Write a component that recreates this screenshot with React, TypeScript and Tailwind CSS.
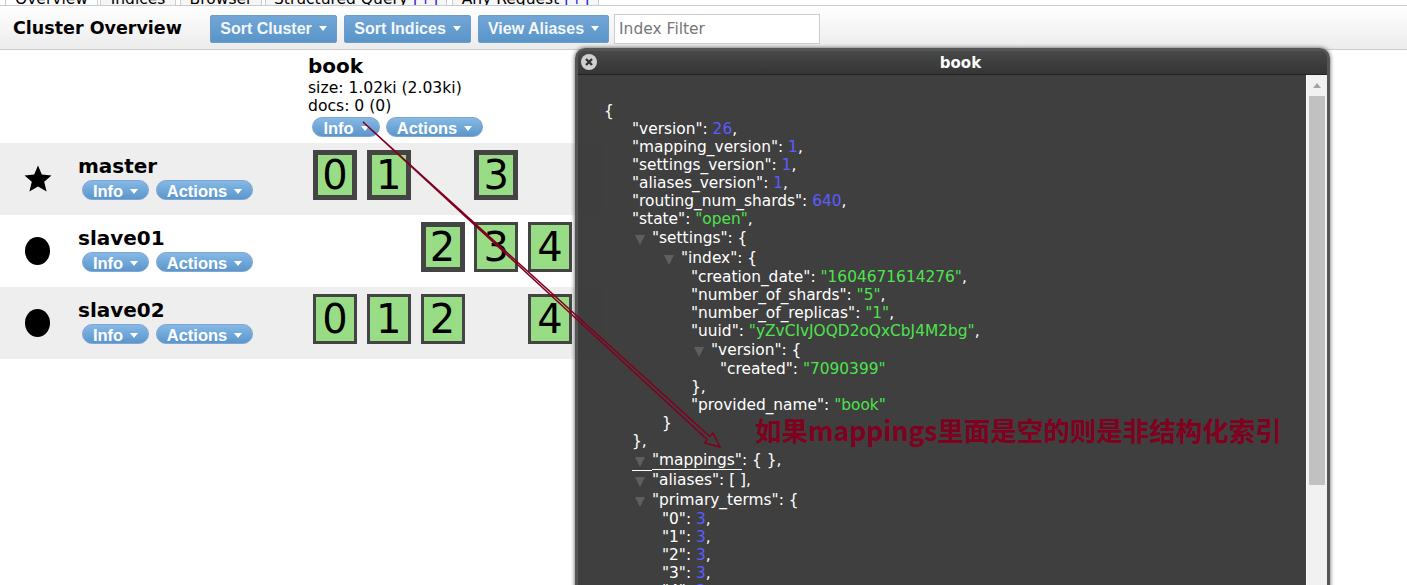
import React from "react";

type Tok = { t: string; c?: "num" | "str" };
type Line = { cls: string; toks: Tok[]; toggle?: boolean; under?: boolean };

const k = (t: string): Tok => ({ t });
const n = (t: string): Tok => ({ t, c: "num" });
const s = (t: string): Tok => ({ t, c: "str" });

const lines: Line[] = [
  { cls: "pl-[26px]", toks: [k("{")] },
  { cls: "pl-[54px]", toks: [k('"version": '), n("26"), k(",")] },
  { cls: "pl-[54px]", toks: [k('"mapping_version": '), n("1"), k(",")] },
  { cls: "pl-[54px]", toks: [k('"settings_version": '), n("1"), k(",")] },
  { cls: "pl-[54px]", toks: [k('"aliases_version": '), n("1"), k(",")] },
  { cls: "pl-[54px]", toks: [k('"routing_num_shards": '), n("640"), k(",")] },
  { cls: "pl-[54px]", toks: [k('"state": '), s('"open"'), k(",")] },
  { cls: "pl-[74px]", toks: [k('"settings": {')], toggle: true },
  { cls: "pl-[103px]", toks: [k('"index": {')], toggle: true },
  { cls: "pl-[113px]", toks: [k('"creation_date": '), s('"1604671614276"'), k(",")] },
  { cls: "pl-[113px]", toks: [k('"number_of_shards": '), s('"5"'), k(",")] },
  { cls: "pl-[113px]", toks: [k('"number_of_replicas": '), s('"1"'), k(",")] },
  { cls: "pl-[113px]", toks: [k('"uuid": '), s('"yZvCIvJOQD2oQxCbJ4M2bg"'), k(",")] },
  { cls: "pl-[133px]", toks: [k('"version": {')], toggle: true },
  { cls: "pl-[142px]", toks: [k('"created": '), s('"7090399"')] },
  { cls: "pl-[113px]", toks: [k("},")] },
  { cls: "pl-[113px]", toks: [k('"provided_name": '), s('"book"')] },
  { cls: "pl-[84px]", toks: [k("}")] },
  { cls: "pl-[54px]", toks: [k("},")] },
  { cls: "pl-[74px]", toks: [k('"mappings"'), k(": { },")], toggle: true, under: true },
  { cls: "pl-[74px]", toks: [k('"aliases": [ ],')], toggle: true },
  { cls: "pl-[74px]", toks: [k('"primary_terms": {')], toggle: true },
  { cls: "pl-[84px]", toks: [k('"0": '), n("3"), k(",")] },
  { cls: "pl-[84px]", toks: [k('"1": '), n("3"), k(",")] },
  { cls: "pl-[84px]", toks: [k('"2": '), n("3"), k(",")] },
  { cls: "pl-[84px]", toks: [k('"3": '), n("3"), k(",")] },
  { cls: "pl-[84px]", toks: [k('"4": '), n("3")] },
];

const tabs = [
  { label: "Overview", cls: "w-[93px] mr-[2px] bg-white", plus: false },
  { label: "Indices", cls: "w-[76px] mr-[4px] bg-[#f6f6f6]", plus: false },
  { label: "Browser", cls: "w-[82px] mr-[3px] bg-[#f6f6f6]", plus: false },
  { label: "Structured Query", cls: "w-[182px] mr-[5px] bg-[#f6f6f6]", plus: true },
  { label: "Any Request", cls: "w-[147px] bg-[#f6f6f6]", plus: true },
];

const Caret = () => (
  <span className="ml-[7px] inline-block h-0 w-0 border-x-[4.5px] border-t-[5px] border-x-transparent border-t-white" />
);

const ToolButton = ({ label, cls }: { label: string; cls: string }) => (
  <div
    className={`flex h-[28px] items-center justify-center rounded-[2px] border border-[#6c9cc9] bg-gradient-to-b from-[#72a6d6] to-[#5a95c9] font-['Liberation_Sans',sans-serif] text-[16px] font-bold text-[#f2f7fb] ${cls}`}
  >
    {label}
    <Caret />
  </div>
);

const PillButton = ({ label, cls }: { label: string; cls: string }) => (
  <div
    className={`flex h-[20px] items-center justify-center rounded-[10px] border border-[#82a4d6] bg-gradient-to-b from-[#86b9e5] to-[#5b96cb] pt-[2px] font-['Liberation_Sans',sans-serif] text-[16.5px] font-bold leading-none text-white ${cls}`}
  >
    {label}
    <Caret />
  </div>
);

const Shard = ({ num, primary }: { num: number | null; primary?: boolean }) => {
  if (num === null) return <div />;
  return (
    <div
      className={`flex h-[50px] w-[44px] items-center justify-center border-[#444] bg-[#98dd86] text-[40px] leading-none text-black ${
        primary ? "border-[5px]" : "border-[3px]"
      }`}
    >
      {num}
    </div>
  );
};

const nodes = [
  { name: "master", icon: "star", shards: [0, 1, null, 3, null], primary: true, bg: "bg-[#eeeeee]" },
  { name: "slave01", icon: "dot", shards: [null, null, 2, 3, 4], primary: false, bg: "bg-white" },
  { name: "slave02", icon: "dot", shards: [0, 1, 2, null, 4], primary: false, bg: "bg-[#eeeeee]" },
];

const NodeIcon = ({ kind }: { kind: string }) => (
  <svg width="30" height="30" viewBox="0 0 30 30">
    {kind === "star" ? (
      <polygon points="15,1.5 18.8,10.6 28.5,11.4 21.2,17.8 23.6,27.5 15,22.4 6.4,27.5 8.8,17.8 1.5,11.4 11.2,10.6" fill="#000" />
    ) : (
      <ellipse cx="14.5" cy="15" rx="12.5" ry="14" fill="#000" />
    )}
  </svg>
);

const JsonLine = ({ line }: { line: Line }) => (
  <div className={`relative flex items-center whitespace-pre ${line.cls} ${line.toggle ? "h-[20px]" : "h-[18px]"}`}>
    {line.toggle && (
      <span
        className={`absolute top-0 flex h-[20px] w-[20px] items-center -translate-x-[20px] ${
          line.under ? "border-b border-white" : ""
        }`}
      >
        <span className="ml-[3px] mt-[2px] h-0 w-0 border-x-[5.5px] border-t-[10px] border-x-transparent border-t-[#5f5f5f]" />
      </span>
    )}
    {line.toks.map((tok, i) => (
      <span
        key={i}
        className={
          tok.c === "num"
            ? "text-[#5c5cff]"
            : tok.c === "str"
              ? "text-[#4ee34e]"
              : line.under && i === 0
                ? "border-b border-white leading-[17px]"
                : "text-white"
        }
      >
        {tok.t}
      </span>
    ))}
  </div>
);

export default function App() {
  return (
    <div className="relative h-[585px] w-[1407px] overflow-hidden bg-white font-['DejaVu_Sans',sans-serif] text-black">
      {/* tabs, cut off by the top of the picture */}
      <div className="flex h-[6px] items-end overflow-hidden border-b border-[#cccccc] pl-[5px]">
        {tabs.map((tab) => (
          <div
            key={tab.label}
            className={`flex h-[20px] shrink-0 items-end justify-center border-x border-[#cccccc] text-[15.5px] leading-[12px] ${tab.cls}`}
          >
            <span className="whitespace-pre">
              {tab.label}
              {tab.plus && (
                <>
                  {" "}
                  <span className="text-[#2222dd]">[+]</span>
                </>
              )}
            </span>
          </div>
        ))}
      </div>

      {/* toolbar */}
      <div className="flex h-[44px] items-center border-b border-[#cccccc] bg-gradient-to-b from-white to-[#ececec] pl-[13px] pt-[2px]">
        <div className="w-[197px] text-[17.5px] font-bold">Cluster Overview</div>
        <ToolButton label="Sort Cluster" cls="w-[127px]" />
        <ToolButton label="Sort Indices" cls="ml-[7px] w-[127px]" />
        <ToolButton label="View Aliases" cls="ml-[7px] w-[131px]" />
        <input
          className="ml-[5px] h-[30px] w-[206px] border border-[#cccccc] bg-white pl-[4px] text-[15.5px] outline-none placeholder:text-[#777777]"
          placeholder="Index Filter"
        />
      </div>

      {/* index header */}
      <div className="h-[93px] pl-[308px] pt-[3px]">
        <div className="text-[20px] font-bold leading-[26px]">book</div>
        <div className="text-[15.6px] leading-[18px]">size: 1.02ki (2.03ki)</div>
        <div className="text-[15.6px] leading-[18px]">docs: 0 (0)</div>
        <div className="ml-[4px] mt-[2px] flex gap-[6px]">
          <PillButton label="Info" cls="w-[68px]" />
          <PillButton label="Actions" cls="w-[97px]" />
        </div>
      </div>

      {/* nodes */}
      {nodes.map((node) => (
        <div key={node.name} className={`flex h-[72px] w-[602px] ${node.bg}`}>
          <div className="flex w-[78px] items-center pl-[23px]">
            <NodeIcon kind={node.icon} />
          </div>
          <div className="w-[235px] pt-[10px]">
            <div className="text-[20px] font-bold leading-[26px]">{node.name}</div>
            <div className="ml-[4px] mt-[1px] flex gap-[7px]">
              <PillButton label="Info" cls="w-[67px]" />
              <PillButton label="Actions" cls="w-[97px]" />
            </div>
          </div>
          <div className="grid grid-cols-[repeat(5,53.75px)] items-start pt-[7px]">
            {node.shards.map((num, i) => (
              <Shard key={i} num={num} primary={node.primary || (node.name === "slave01" && num === 2)} />
            ))}
          </div>
        </div>
      ))}

      {/* json dialog */}
      <div className="absolute left-[575px] top-[48px] flex h-[560px] w-[755px] flex-col rounded-t-[10px] border-x-[3px] border-t-[3px] border-[#555555] bg-[#2f2f2f]/[0.92] shadow-[0_0_4px_#555555]">
        <div className="relative flex h-[24px] shrink-0 items-center justify-center rounded-t-[7px] border-b border-[#222222] bg-gradient-to-b from-[#484848] to-[#353535] pl-[16px] pt-[1px] text-[15px] font-bold text-white">
          book
          <svg className="absolute left-[3px] top-[3px]" width="16" height="16" viewBox="0 0 16 16">
            <circle cx="8" cy="8" r="8" fill="#cfcfcf" />
            <path d="M5 5 L11 11 M11 5 L5 11" stroke="#333333" strokeWidth="2.4" />
          </svg>
        </div>
        <div className="flex min-h-0 flex-1">
          <div className="flex-1 overflow-hidden pt-[28px] text-[15.4px] text-white">
            {lines.map((line, i) => (
              <JsonLine key={i} line={line} />
            ))}
          </div>
          <div className="w-[21px] shrink-0 border-l border-white bg-[#f1f1f1]">
            <div className="flex h-[21px] items-center justify-center">
              <span className="h-0 w-0 border-x-[4.5px] border-b-[5px] border-x-transparent border-b-[#a3a3a3]" />
            </div>
            <div className="mx-[2px] h-[389px] bg-[#c1c1c1]" />
          </div>
        </div>
      </div>

      {/* hand-drawn annotation on top of the screenshot */}
      <svg className="pointer-events-none absolute left-0 top-0" width="1407" height="585">
        <polygon
          points="363,122 709.8,436.5 713,433 720,447 705,443 707.1,439.5"
          fill="none"
          stroke="#800020"
          strokeWidth="1.5"
        />
      </svg>
      <div className="absolute left-[755px] top-[415px] whitespace-nowrap font-['Noto_Sans_CJK_SC',sans-serif] text-[26.5px] font-bold leading-[30px] text-[#800020]">
        如果mappings里面是空的则是非结构化索引
      </div>
    </div>
  );
}
